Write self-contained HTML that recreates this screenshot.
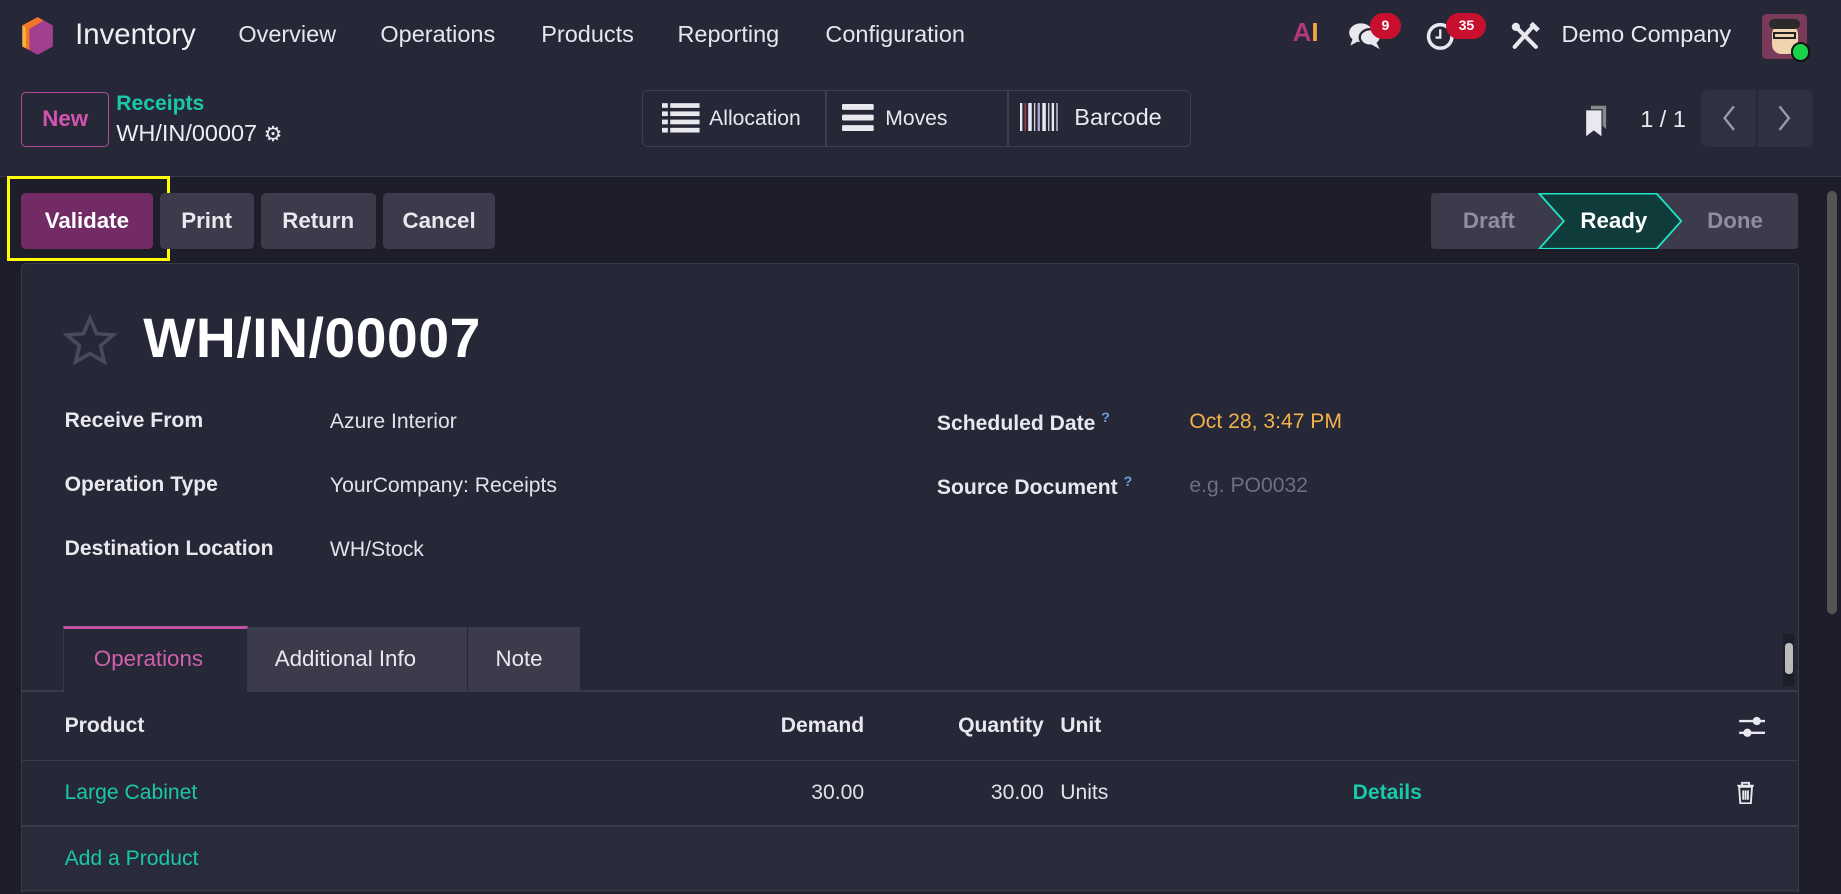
<!DOCTYPE html>
<html><head><meta charset="utf-8"><style>
*{box-sizing:border-box;margin:0;padding:0}
html,body{width:1841px;height:894px;overflow:hidden;background:#1e1e2a}
#w{position:absolute;left:0;top:0;width:1568px;height:761px;zoom:1.174107;font-family:"Liberation Sans",sans-serif;color:#e8e8ee;background:#1e1e2a;overflow:hidden}
.a{position:absolute;white-space:nowrap}
.top{left:0;top:0;width:1568px;height:62px;background:#262837}
.cp{left:0;top:62px;width:1568px;height:89px;background:#262837;border-bottom:1px solid #3a3b4a}
.nav{font-size:20px;top:18px;color:#e6e6ec}
.btn{border-radius:4px;background:#3c3b4c;color:#e8e8ee;font-weight:bold;font-size:19px;text-align:center;line-height:48px;height:48px;top:164px}
.lbl{font-weight:bold;font-size:18px;color:#e8e8ee}
.val{font-size:18px;color:#e2e2e8}
.badge{background:#c8102e;color:#fff;font-size:12px;font-weight:bold;border-radius:12px;height:22px;line-height:22px;text-align:center}
</style></head><body><div id="w">
<div class="a top"></div>
<svg class="a" style="left:17px;top:14px" width="30" height="34" viewBox="0 0 30 34"><path d="M15 1 L28 8 L28 26 L15 33 L2 26 L2 8Z" fill="#a23f8e"/><path d="M15 1 L2 8 L2 26 L8 29 L8 11 L20 4Z" fill="#f0772a"/><path d="M2 8 L2 26 L5 27.5 L5 10Z" fill="#f7b03c"/></svg>
<div class="a" style="left:64px;top:15px;font-size:25px;color:#f0f0f4">Inventory</div>
<div class="a nav" style="left:203px">Overview</div>
<div class="a nav" style="left:324px">Operations</div>
<div class="a nav" style="left:461px">Products</div>
<div class="a nav" style="left:577px">Reporting</div>
<div class="a nav" style="left:703px">Configuration</div>
<div class="a" style="left:1101px;top:16px;font-size:22px;font-weight:bold;color:#f4a93c"><span style="color:#b0397e">A</span>I</div>
<svg class="a" style="left:1148px;top:18px" width="30" height="26" viewBox="0 0 30 26"><ellipse cx="11" cy="10" rx="10" ry="8" fill="#e8e8ee"/><path d="M4 15 L2 21 L9 17Z" fill="#e8e8ee"/><ellipse cx="19" cy="14" rx="9" ry="7" fill="#e8e8ee" stroke="#262837" stroke-width="2"/><path d="M24 18 L27 24 L20 20Z" fill="#e8e8ee"/></svg>
<div class="a badge" style="left:1167px;top:11px;width:26px">9</div>
<svg class="a" style="left:1214px;top:17px" width="28" height="28" viewBox="0 0 28 28"><circle cx="13" cy="14" r="10" fill="none" stroke="#e8e8ee" stroke-width="3"/><path d="M13 8 V15 H9" stroke="#e8e8ee" stroke-width="2" fill="none"/></svg>
<div class="a badge" style="left:1232px;top:11px;width:34px">35</div>
<svg class="a" style="left:1286px;top:18px" width="26" height="26" viewBox="0 0 26 26"><path d="M4 22 L20 4 M4 4 L22 22" stroke="#e8e8ee" stroke-width="3.5" stroke-linecap="round"/><circle cx="5" cy="5" r="3.5" fill="#e8e8ee"/><path d="M18 2 L24 8" stroke="#e8e8ee" stroke-width="4"/></svg>
<div class="a" style="left:1330px;top:18px;font-size:20px;color:#e8e8ee">Demo Company</div>
<div class="a" style="left:1501px;top:12px;width:38px;height:38px;border-radius:4px;background:#7a3a5a"><div class="a" style="left:8px;top:8px;width:22px;height:26px;border-radius:10px 10px 8px 8px;background:#f2d3b0"></div><div class="a" style="left:6px;top:4px;width:26px;height:9px;border-radius:6px;background:#2a2a2a"></div><div class="a" style="left:9px;top:15px;width:20px;height:6px;border:2px solid #222"></div></div>
<div class="a" style="left:1525px;top:36px;width:17px;height:17px;border-radius:50%;background:#1ad34a;border:2px solid #111"></div>

<div class="a cp"></div>
<div class="a" style="left:18px;top:78px;width:75px;height:47px;border:1px solid #b04a9a;border-radius:4px;color:#d155b0;font-weight:bold;font-size:19px;text-align:center;line-height:45px">New</div>
<div class="a" style="left:99px;top:78px;font-size:18px;font-weight:bold;color:#1ac8a8">Receipts</div>
<div class="a" style="left:99px;top:102px;font-size:20px;color:#ececf2">WH/IN/00007 <span style="font-size:18px">⚙</span></div>
<div class="a" style="left:547px;top:77px;width:467px;height:48px;border:1px solid #3d3e50;border-radius:5px"></div>
<div class="a" style="left:703px;top:77px;width:1px;height:48px;background:#3d3e50"></div>
<div class="a" style="left:858px;top:77px;width:1px;height:48px;background:#3d3e50"></div>
<svg class="a" style="left:564px;top:87px" width="32" height="26"><g fill="#e8e8ee"><rect x="0" y="1" width="5" height="4"/><rect x="7" y="1" width="25" height="4"/><rect x="0" y="8" width="5" height="4"/><rect x="7" y="8" width="25" height="4"/><rect x="0" y="15" width="5" height="4"/><rect x="7" y="15" width="25" height="4"/><rect x="0" y="22" width="5" height="4"/><rect x="7" y="22" width="25" height="4"/></g></svg>
<div class="a" style="left:604px;top:91px;font-size:18px">Allocation</div>
<svg class="a" style="left:717px;top:89px" width="27" height="24"><g fill="#e8e8ee"><rect y="0" width="27" height="5" rx="1"/><rect y="9" width="27" height="5" rx="1"/><rect y="18" width="27" height="5" rx="1"/></g></svg>
<div class="a" style="left:754px;top:91px;font-size:18px">Moves</div>
<svg class="a" style="left:869px;top:88px" width="32" height="24"><g fill="#e8e8ee"><rect x="0" width="2" height="24"/><rect x="4" width="1" height="24" fill="#c44"/><rect x="7" width="3" height="24"/><rect x="12" width="1" height="24"/><rect x="15" width="2" height="24" fill="#aac"/><rect x="19" width="3" height="24"/><rect x="24" width="1" height="24"/><rect x="27" width="2" height="24"/><rect x="31" width="1" height="24"/></g></svg>
<div class="a" style="left:915px;top:89px;font-size:20px">Barcode</div>
<svg class="a" style="left:1350px;top:86px" width="22" height="30"><path d="M5 4 H18 V24 L15 21 V7 H5Z" fill="#888"/><path d="M1 8 H14 V30 L7.5 25 L1 30Z" fill="#e8e8ee"/></svg>
<div class="a" style="left:1397px;top:90px;font-size:20px">1 / 1</div>
<div class="a" style="left:1449px;top:77px;width:95px;height:48px;background:#2f3040;border-radius:5px"></div>
<div class="a" style="left:1496px;top:77px;width:1px;height:48px;background:#262837"></div>
<svg class="a" style="left:1466px;top:89px" width="14" height="24"><path d="M11 2 L3 12 L11 22" stroke="#9a9aa8" stroke-width="2" fill="none"/></svg>
<svg class="a" style="left:1513px;top:89px" width="14" height="24"><path d="M3 2 L11 12 L3 22" stroke="#9a9aa8" stroke-width="2" fill="none"/></svg>

<div class="a" style="left:6px;top:150px;width:139px;height:72px;border:3px solid #ffff00"></div>
<div class="a btn" style="left:18px;width:112px;background:#722b64;color:#fff">Validate</div>
<div class="a btn" style="left:136px;width:80px">Print</div>
<div class="a btn" style="left:222px;width:98px">Return</div>
<div class="a btn" style="left:326px;width:96px">Cancel</div>
<div class="a" style="left:1219px;top:164px;width:312px;height:48px;background:#3c3b4c;border-radius:3px"></div>
<svg class="a" style="left:1310px;top:164px" width="130" height="48"><path d="M1 0.5 H101 L122 24 L101 47.5 H1 L22 24Z" fill="#0f3b3b" stroke="#1ee8c8" stroke-width="1.5"/></svg>
<div class="a" style="left:1246px;top:177px;font-size:19px;font-weight:bold;color:#8e8e9c">Draft</div>
<div class="a" style="left:1346px;top:177px;font-size:19px;font-weight:bold;color:#fff">Ready</div>
<div class="a" style="left:1454px;top:177px;font-size:19px;font-weight:bold;color:#8e8e9c">Done</div>
<div class="a" style="left:1556px;top:163px;width:9px;height:360px;background:#555;border-radius:4px"></div>

<div class="a" style="left:18px;top:224px;width:1514px;height:537px;background:#262837;border:1px solid #3a3b4a;border-bottom:none;border-radius:4px 4px 0 0"></div>
<svg class="a" style="left:54px;top:268px" width="46" height="44" viewBox="0 0 24 23"><path d="M12 1.5 L14.9 8.3 L22.3 8.9 L16.7 13.7 L18.4 20.9 L12 17.1 L5.6 20.9 L7.3 13.7 L1.7 8.9 L9.1 8.3Z" fill="none" stroke="#4a4a5a" stroke-width="1.6"/></svg>
<div class="a" style="left:122px;top:261px;font-size:47px;font-weight:bold;color:#fff;letter-spacing:0.5px">WH/IN/00007</div>
<div class="a lbl" style="left:55px;top:348px">Receive From</div>
<div class="a val" style="left:281px;top:349px">Azure Interior</div>
<div class="a lbl" style="left:55px;top:403px">Operation Type</div>
<div class="a val" style="left:281px;top:404px">YourCompany: Receipts</div>
<div class="a lbl" style="left:55px;top:457px">Destination Location</div>
<div class="a val" style="left:281px;top:458px">WH/Stock</div>
<div class="a lbl" style="left:798px;top:348px">Scheduled Date <sup style="color:#6aa0e0;font-size:12px">?</sup></div>
<div class="a val" style="left:1013px;top:349px;color:#f5b14a">Oct 28, 3:47 PM</div>
<div class="a lbl" style="left:798px;top:403px">Source Document <sup style="color:#6aa0e0;font-size:12px">?</sup></div>
<div class="a val" style="left:1013px;top:404px;color:#6e7080">e.g. PO0032</div>

<div class="a" style="left:19px;top:588px;width:1512px;height:1px;background:#3a3b4a"></div>
<div class="a" style="left:54px;top:533px;width:157px;height:56px;background:#262837;border:1px solid #3a3b4a;border-bottom:none;border-top:3px solid #c050a0"></div>
<div class="a" style="left:80px;top:550px;font-size:19px;color:#d060aa">Operations</div>
<div class="a" style="left:211px;top:534px;width:187px;height:54px;background:#3c3b4c"></div>
<div class="a" style="left:234px;top:550px;font-size:19px">Additional Info</div>
<div class="a" style="left:399px;top:534px;width:95px;height:54px;background:#3c3b4c"></div>
<div class="a" style="left:422px;top:550px;font-size:19px">Note</div>
<div class="a" style="left:1519px;top:540px;width:9px;height:44px;background:#1e1e2a"><div class="a" style="left:1px;top:8px;width:7px;height:26px;background:#bbb;border-radius:3px"></div></div>

<div class="a lbl" style="left:55px;top:608px">Product</div>
<div class="a lbl" style="right:832px;top:608px">Demand</div>
<div class="a lbl" style="right:679px;top:608px">Quantity</div>
<div class="a lbl" style="left:903px;top:608px">Unit</div>
<svg class="a" style="left:1480px;top:608px" width="24" height="22"><g stroke="#e8e8ee" stroke-width="2"><line x1="1" y1="6" x2="23" y2="6"/><line x1="1" y1="16" x2="23" y2="16"/></g><circle cx="16" cy="6" r="3.5" fill="#e8e8ee"/><circle cx="8" cy="16" r="3.5" fill="#e8e8ee"/></svg>
<div class="a" style="left:19px;top:647px;width:1512px;height:1px;background:#3a3b4a"></div>
<div class="a val" style="left:55px;top:665px;color:#1ac8a8">Large Cabinet</div>
<div class="a val" style="right:832px;top:665px">30.00</div>
<div class="a val" style="right:679px;top:665px">30.00</div>
<div class="a val" style="left:903px;top:665px">Units</div>
<div class="a val" style="left:1152px;top:665px;color:#1ac8a8;font-weight:bold">Details</div>
<svg class="a" style="left:1478px;top:665px" width="18" height="20"><path d="M2 4 H16 M6 4 V1.5 H12 V4 M3.5 5 L4.5 19 H13.5 L14.5 5Z M7 8 V16 M9 8 V16 M11 8 V16" stroke="#e8e8ee" stroke-width="1.6" fill="none"/></svg>
<div class="a" style="left:19px;top:703px;width:1512px;height:1px;background:#3a3b4a"></div>
<div class="a" style="left:19px;top:704px;width:1512px;height:54px;background:#292a3a"></div>
<div class="a val" style="left:55px;top:721px;color:#1ac8a8">Add a Product</div>
<div class="a" style="left:19px;top:758px;width:1512px;height:1px;background:#3a3b4a"></div>
</div></body></html>
